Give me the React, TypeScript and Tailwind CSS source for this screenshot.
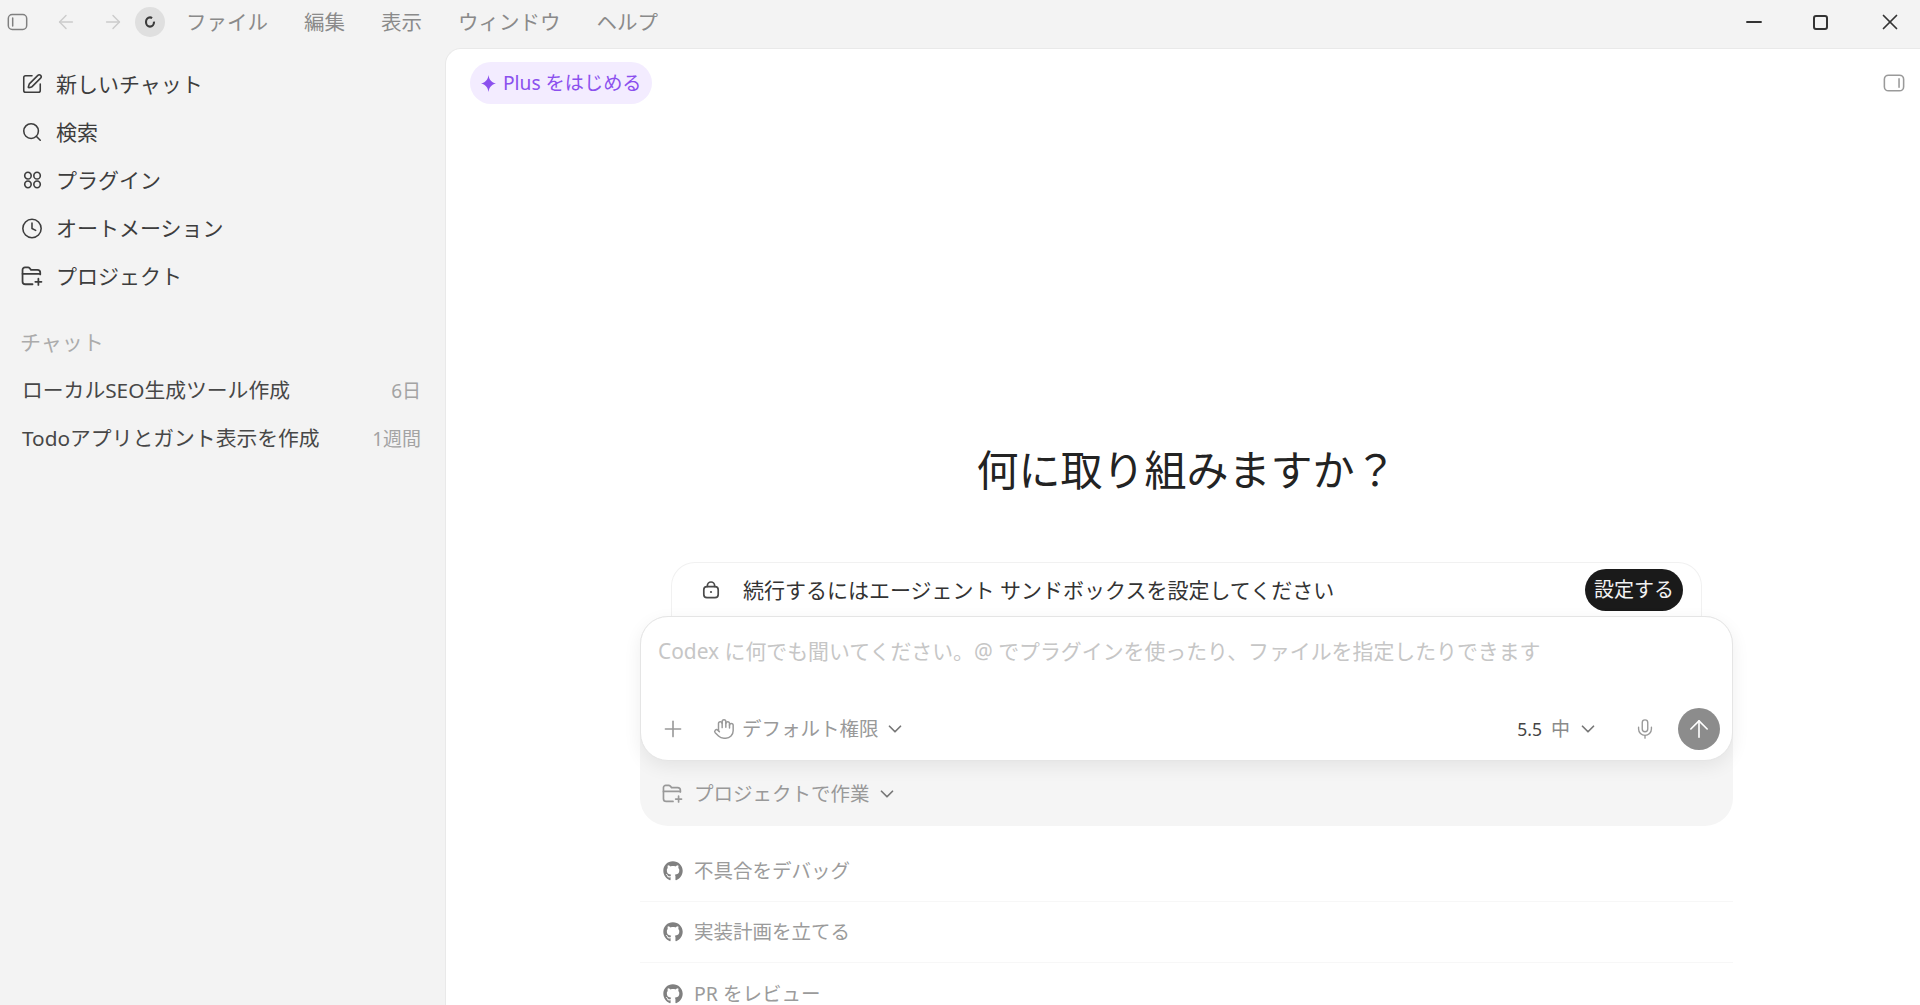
import { ArrowLeft, ArrowRight, ArrowUp, ChevronDown, Clock, Hand, Mic, Minus, Plus, Search, SquarePen, X } from 'lucide-react';
import { FaGithub } from 'react-icons/fa';
import type { ReactNode } from 'react';

function FolderPlusIcon({ className }: { className?: string }) {
  return (
    <svg className={className} viewBox="0 0 20 20" fill="none" stroke="currentColor" strokeWidth="1.6" strokeLinecap="round" strokeLinejoin="round">
      <path d="M10.5 17.5H4a2.6 2.6 0 0 1-2.6-2.6V4.4A2.2 2.2 0 0 1 3.6 2.2h2.8c.6 0 1.1.3 1.5.7l1.2 1.5h5.8a2.6 2.6 0 0 1 2.6 2.6v1.6" />
      <path d="M1.4 8h16" />
      <path d="M15.8 12.5v5.6M13 15.3h5.6" />
    </svg>
  );
}

function PluginIcon({ className }: { className?: string }) {
  return (
    <svg className={className} viewBox="0 0 20 20" fill="none" stroke="currentColor" strokeWidth="1.7">
      <ellipse cx="5.2" cy="5.4" rx="3.4" ry="3.6" />
      <ellipse cx="14.8" cy="5.4" rx="3.4" ry="3.6" />
      <ellipse cx="5.2" cy="14.6" rx="3.4" ry="3.6" />
      <ellipse cx="14.8" cy="14.6" rx="3.4" ry="3.6" />
    </svg>
  );
}

function PanelIcon({ side, className }: { side: 'left' | 'right'; className?: string }) {
  const x = side === 'left' ? 6.5 : 17.5;
  return (
    <svg className={className} viewBox="0 0 24 20" fill="none" stroke="currentColor" strokeWidth="1.7" strokeLinecap="round">
      <rect x="1.5" y="1.5" width="21" height="17" rx="4.5" />
      <path d={`M${x} 5.5v9`} />
    </svg>
  );
}

function LockIcon({ className }: { className?: string }) {
  return (
    <svg className={className} viewBox="0 0 18 18" fill="none" stroke="currentColor" strokeWidth="1.7" strokeLinecap="round">
      <rect x="1.8" y="5.6" width="14.4" height="11" rx="3.2" />
      <path d="M5.4 5.4V4.6a3.6 3.6 0 0 1 7.2 0v.8" />
      <circle cx="9" cy="11" r="1.1" fill="currentColor" stroke="none" />
    </svg>
  );
}

function SparkIcon({ className }: { className?: string }) {
  return (
    <svg className={className} viewBox="0 0 14 16" fill="currentColor">
      <path d="M7 0c.6 4 2.2 6.6 7 8-4.8 1.4-6.4 4-7 8-.6-4-2.2-6.6-7-8 4.8-1.4 6.4-4 7-8z" />
    </svg>
  );
}

function SpinnerIcon({ className }: { className?: string }) {
  return (
    <svg className={className} viewBox="0 0 12 14" fill="none" strokeWidth="2.1">
      <ellipse cx="6" cy="7" rx="4" ry="4.6" stroke="#3a3a3a" strokeDasharray="22 4" />
    </svg>
  );
}

function SidebarRow({ icon, label }: { icon: ReactNode; label: string }) {
  return (
    <div className="flex h-12 items-center pl-[21px] text-[21px] text-[#3d3d3d]">
      <span className="flex w-[22px] justify-center">{icon}</span>
      <span className="ml-[13px] pt-[1px]">{label}</span>
    </div>
  );
}

function ChatRow({ title, age }: { title: string; age: string }) {
  return (
    <div className="flex h-12 items-center justify-between pl-[22px] pr-[24px] text-[20.8px]">
      <span className="text-[#474747]">{title}</span>
      <span className="text-[19px] text-[#a3a3a3]">{age}</span>
    </div>
  );
}

function Suggestion({ label, last }: { label: string; last?: boolean }) {
  return (
    <div className={`flex h-[61px] items-center pl-[23px] text-[19.5px] text-[#9b9b9b] ${last ? '' : 'border-b border-[#f7f7f7]'}`}>
      <FaGithub className="h-[20px] w-[20px] text-[#808080]" />
      <span className="ml-[11px]">{label}</span>
    </div>
  );
}

export default function App() {
  const menus = ['ファイル', '編集', '表示', 'ウィンドウ', 'ヘルプ'];

  return (
    <div className="flex h-[1005px] w-[1920px] flex-col overflow-hidden bg-[#f3f3f3] [font-family:'Noto_Sans','Noto_Sans_CJK_JP',sans-serif]">
      {/* title bar */}
      <header className="flex h-12 shrink-0 items-center pb-[4px]">
        <PanelIcon side="left" className="ml-[7px] h-[18px] w-[21px] text-[#808080]" />
        <ArrowLeft className="ml-[27px] h-[22px] w-[22px] text-[#cccccc]" strokeWidth={1.6} />
        <ArrowRight className="ml-[25px] h-[22px] w-[22px] text-[#cccccc]" strokeWidth={1.6} />
        <div className="ml-[11px] flex h-[30px] w-[30px] items-center justify-center rounded-full bg-[#dfdfdf]">
          <SpinnerIcon className="h-[14px] w-[12px]" />
        </div>
        <nav className="ml-[21px] flex gap-[36px] text-[20.5px] text-[#8a8a8a]">
          {menus.map(m => (
            <span key={m}>{m}</span>
          ))}
        </nav>
        <div className="ml-auto flex items-center pr-[17px] text-[#333333]">
          <Minus className="h-[24px] w-[24px]" strokeWidth={1.9} />
          <div className="ml-[47px] h-[15px] w-[15px] rounded-[3px] border-2 border-[#333333]" />
          <X className="ml-[49px] h-[26px] w-[26px]" strokeWidth={1.6} />
        </div>
      </header>

      <div className="flex min-h-0 flex-1">
        {/* sidebar */}
        <aside className="w-[445px] shrink-0 pt-[12px]">
          <SidebarRow icon={<SquarePen className="h-[22px] w-[22px]" strokeWidth={1.7} />} label="新しいチャット" />
          <SidebarRow icon={<Search className="h-[22px] w-[22px]" strokeWidth={1.7} />} label="検索" />
          <SidebarRow icon={<PluginIcon className="h-[20px] w-[19px]" />} label="プラグイン" />
          <SidebarRow icon={<Clock className="h-[23px] w-[23px]" strokeWidth={1.7} />} label="オートメーション" />
          <SidebarRow icon={<FolderPlusIcon className="h-[22px] w-[22px]" />} label="プロジェクト" />
          <div className="mt-[19px] flex h-12 items-center pl-[20px] text-[21px] text-[#ababab]">チャット</div>
          <ChatRow title="ローカルSEO生成ツール作成" age="6日" />
          <ChatRow title="Todoアプリとガント表示を作成" age="1週間" />
        </aside>

        {/* main */}
        <main className="min-w-0 flex-1 overflow-hidden rounded-tl-[16px] border-l border-t border-[#e9e9e9] bg-white">
          <div className="flex items-center justify-between pl-[24px] pr-[15px] pt-[13px]">
            <div className="flex h-[42px] items-center rounded-full bg-[#f3ecff] pl-[11px] pr-[10px] text-[19.2px] text-[#8b50ee]">
              <SparkIcon className="h-[17px] w-[15px]" />
              <span className="ml-[7px]">Plus をはじめる</span>
            </div>
            <PanelIcon side="right" className="h-[20px] w-[22px] text-[#9a9a9a]" />
          </div>

          <h1 className="mt-[336px] pl-[7px] text-center text-[42px] font-normal leading-[60px] text-[#232323]">何に取り組みますか？</h1>

          <div className="ml-[194px] w-[1093px]">
            {/* sandbox notice */}
            <div className="mx-[31px] mt-[62px] flex h-[70px] items-start justify-between rounded-t-[24px] border border-b-0 border-[#f1f1f1] pl-[30px] pr-[18px] pt-[6px]">
              <div className="flex h-[42px] items-center text-[21px] text-[#333333]">
                <LockIcon className="h-[18px] w-[18px] text-[#4a4a4a]" />
                <span className="ml-[23px] pt-[1px]">続行するにはエージェント サンドボックスを設定してください</span>
              </div>
              <button className="h-[42px] w-[98px] rounded-full bg-[#1a1a1a] text-[20px] text-[#f2f2f2]">設定する</button>
            </div>

            {/* composer */}
            <div className="relative z-10 -mt-[16px] rounded-[28px] bg-[#f5f5f5]">
              <div className="flex h-[145px] flex-col justify-between rounded-[28px] border border-[#e5e5e5] bg-white pb-[10px] pt-[19px] shadow-[0_6px_18px_rgba(0,0,0,0.07)]">
                <div className="pl-[17px] text-[20.9px] leading-[30px] text-[#c6c6c6]">Codex に何でも聞いてください。@ でプラグインを使ったり、ファイルを指定したりできます</div>
                <div className="flex items-center pl-[19px] pr-[12px] text-[#999999]">
                  <Plus className="h-[26px] w-[26px]" strokeWidth={1.5} />
                  <Hand className="ml-[27px] h-[22px] w-[22px]" strokeWidth={1.6} />
                  <span className="ml-[7px] text-[19.5px]">デフォルト権限</span>
                  <ChevronDown className="ml-[5px] h-[22px] w-[22px] text-[#777777]" strokeWidth={1.9} />
                  <span className="ml-auto text-[17.5px] text-[#444444]">5.5</span>
                  <span className="ml-[9px] text-[19px] text-[#8a8a8a]">中</span>
                  <ChevronDown className="ml-[7px] h-[22px] w-[22px] text-[#777777]" strokeWidth={1.9} />
                  <Mic className="ml-[35px] h-[22px] w-[22px]" strokeWidth={1.5} />
                  <div className="ml-[22px] flex h-[42px] w-[42px] items-center justify-center rounded-full bg-[#8c8c8c]">
                    <ArrowUp className="h-[28px] w-[28px] text-white" strokeWidth={1.4} />
                  </div>
                </div>
              </div>
              <div className="flex h-[65px] items-center pl-[22px] text-[19.5px] text-[#999999]">
                <FolderPlusIcon className="h-[21px] w-[21px]" />
                <span className="ml-[11px]">プロジェクトで作業</span>
                <ChevronDown className="ml-[6px] h-[22px] w-[22px] text-[#777777]" strokeWidth={1.9} />
              </div>
            </div>

            {/* suggestions */}
            <div className="mt-[15px]">
              <Suggestion label="不具合をデバッグ" />
              <Suggestion label="実装計画を立てる" />
              <Suggestion label="PR をレビュー" last />
            </div>
          </div>
        </main>
      </div>
    </div>
  );
}
